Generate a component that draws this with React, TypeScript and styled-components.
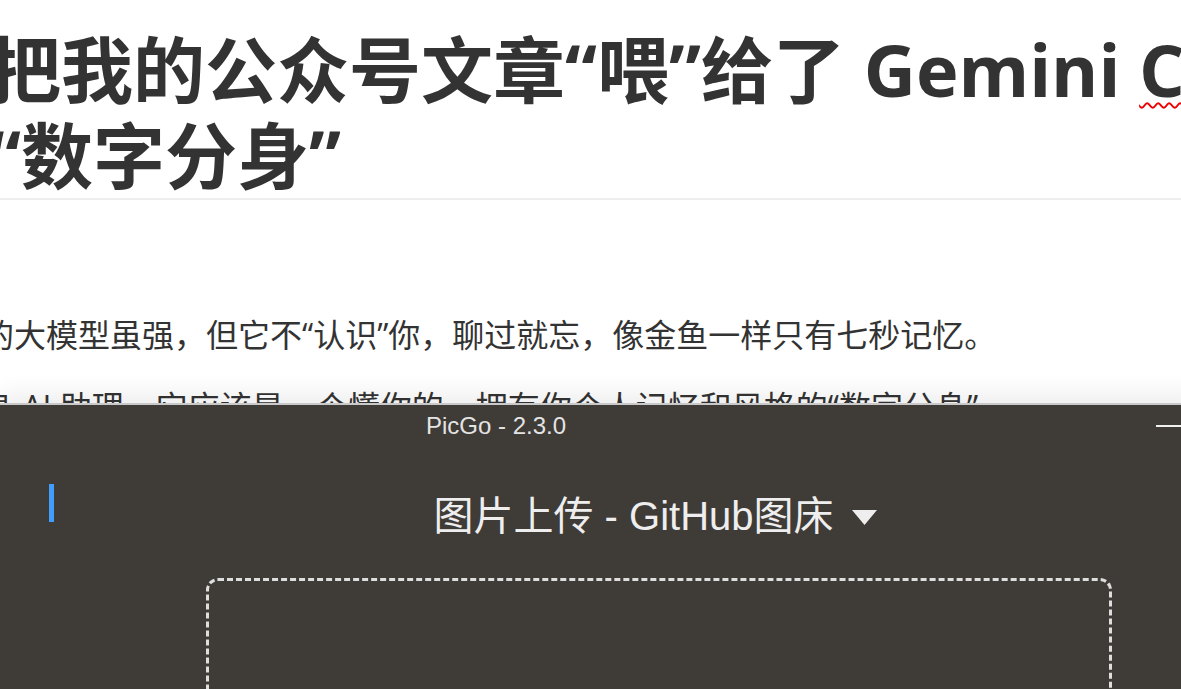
import React from 'react'
import styled, { createGlobalStyle } from 'styled-components'

const GlobalStyle = createGlobalStyle`
html, body {
    margin: 0;
    padding: 0;
    background: #fff;
    overflow: hidden;
}
`
const Screen = styled.div`
width: 1181px;
height: 689px;
display: flex;
flex-direction: column;
overflow: hidden;
`
const Article = styled.div`
height: 403px;
flex: none;
overflow: hidden;
background: #fff;
`
const ArticleInner = styled.div`
width: 1700px;
margin-left: -11px;
font-family: "Open Sans", "Noto Sans CJK SC", sans-serif;
color: #333;
`
const Title = styled.h1`
margin: 0;
padding: 26px 0 0;
font-size: 72px;
line-height: 86px;
font-weight: 700;
border-bottom: 2px solid #eee;
white-space: nowrap;
`
const Misspelled = styled.span`
text-decoration: underline wavy #e00;
text-decoration-thickness: 2px;
text-underline-offset: 5px;
`
const Paragraph = styled.p<{ $top: number }>`
margin: ${p => p.$top}px 0 0 -7px;
font-size: 32px;
line-height: 48px;
white-space: nowrap;
`
const Window = styled.div`
position: relative;
flex: 1;
width: 1200px;
background: #3f3b37;
border-top: 2px solid #c9c9c9;
box-shadow: 0 -10px 22px rgba(0, 0, 0, 0.07);
color: #eee;
font-family: "Liberation Sans", "Noto Sans CJK SC", sans-serif;
`
const TitleBar = styled.div`
height: 42px;
display: flex;
align-items: center;
`
const WindowTitle = styled.div`
flex: 0 0 992px;
text-align: center;
font-size: 24px;
line-height: 42px;
color: #e4e4e4;
`
const Controls = styled.div`
margin-left: auto;
padding: 0 14px 0 10px;
display: flex;
align-items: center;
`
const MinLine = styled.div`
width: 30px;
height: 2px;
background: #f0f0f0;
`
const Body = styled.div`
display: grid;
grid-template-columns: 176px 966px;
`
const Sidebar = styled.div`
padding-top: 37px;
`
const ActiveBar = styled.div`
margin-left: 49px;
width: 5px;
height: 38px;
background: #409eff;
`
const Main = styled.div`
padding: 39px 30px 0;
display: flex;
flex-direction: column;
`
const Header = styled.div`
display: flex;
justify-content: center;
align-items: center;
padding-right: 8px;
font-size: 40px;
line-height: 60px;
color: #eee;
`
const Caret = styled.svg`
margin-left: 18px;
margin-top: 2px;
`
const DropZone = styled.div`
margin-top: 32px;
height: 300px;
border: 3px dashed #dedede;
border-radius: 12px;
`

export default function App() {
    return (<Screen>
        <GlobalStyle />
        <Article>
            <ArticleInner>
                <Title>
                    把我的公众号文章“喂”给了 Gemini <Misspelled>CLI</Misspelled>，打造出我的<br />
                    “数字分身”
                </Title>
                <Paragraph $top={111}>的大模型虽强，但它不“认识”你，聊过就忘，像金鱼一样只有七秒记忆。</Paragraph>
                <Paragraph $top={24}>身 AI 助理，它应该是一个懂你的，拥有你个人记忆和风格的“数字分身”。</Paragraph>
            </ArticleInner>
        </Article>
        <Window>
            <TitleBar>
                <WindowTitle>PicGo - 2.3.0</WindowTitle>
                <Controls>
                    <MinLine />
                </Controls>
            </TitleBar>
            <Body>
                <Sidebar>
                    <ActiveBar />
                </Sidebar>
                <Main>
                    <Header>
                        图片上传 - GitHub图床
                        <Caret width="25" height="15" viewBox="0 0 25 15">
                            <polygon points="0,0 25,0 12.5,15" fill="#eee" />
                        </Caret>
                    </Header>
                    <DropZone />
                </Main>
            </Body>
        </Window>
    </Screen>)
}
